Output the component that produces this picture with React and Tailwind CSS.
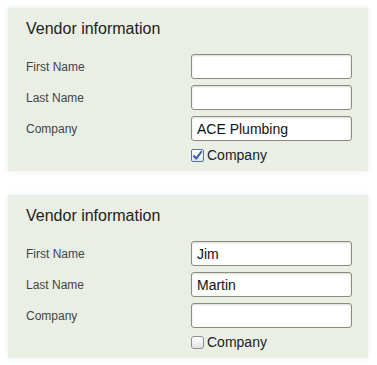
import { useState } from 'react'

function CheckBox({ checked }) {
  return (
    <span
      className={
        checked
          ? 'inline-flex h-[13px] w-[13px] items-center justify-center rounded-[2px] border border-[#5a6f9a] bg-gradient-to-b from-[#ffffff] to-[#dfe6f2]'
          : 'inline-flex h-[13px] w-[13px] items-center justify-center rounded-[3px] border border-[#8f8f8f] bg-gradient-to-b from-[#ffffff] to-[#e3e3e3]'
      }
    >
      {checked && (
        <svg width="11" height="11" viewBox="0 0 11 11">
          <path d="M1.5 5.5 L4.2 8.6 L9.8 1.2" fill="none" stroke="#3a5fb0" strokeWidth="2" strokeLinejoin="round" />
        </svg>
      )}
    </span>
  )
}

function Field({ label, value }) {
  return (
    <div className="flex h-[25px] items-center">
      <label className="w-[165px] text-[12px] text-[#444]">{label}</label>
      <input
        readOnly
        value={value}
        className="h-[25px] w-[161px] rounded-[3px] border border-[#8c8c7c] bg-white px-[5px] font-['Liberation_Sans',Arial,sans-serif] text-[14px] text-[#111] shadow-[inset_0_1px_2px_rgba(0,0,0,0.15)] outline-none"
      />
    </div>
  )
}

function VendorPanel({ first, last, company, isCompany }) {
  return (
    <div className="w-[360px] bg-[#e9efe5] pl-[18px] pt-[10px] pb-[8px] shadow-[0_0_6px_rgba(0,0,0,0.08)]">
      <h2 className="text-[16px] leading-[22px] text-[#222]">Vendor information</h2>
      <div className="mt-[14px] flex flex-col gap-[6px]">
        <Field label="First Name" value={first} />
        <Field label="Last Name" value={last} />
        <Field label="Company" value={company} />
      </div>
      <div className="mt-[6px] flex h-[16px] items-center pl-[165px] text-[14px] text-[#222]">
        <CheckBox checked={isCompany} />
        <span className="ml-[3px]">Company</span>
      </div>
    </div>
  )
}

export default function App() {
  const [panels] = useState([
    { first: '', last: '', company: 'ACE Plumbing', isCompany: true },
    { first: 'Jim', last: 'Martin', company: '', isCompany: false },
  ])

  return (
    <div className="flex h-[365px] w-[377px] flex-col gap-[24px] bg-white pl-[8px] pt-[8px] font-['Liberation_Sans',Arial,sans-serif]">
      {panels.map((p, i) => (
        <VendorPanel key={i} {...p} />
      ))}
    </div>
  )
}
